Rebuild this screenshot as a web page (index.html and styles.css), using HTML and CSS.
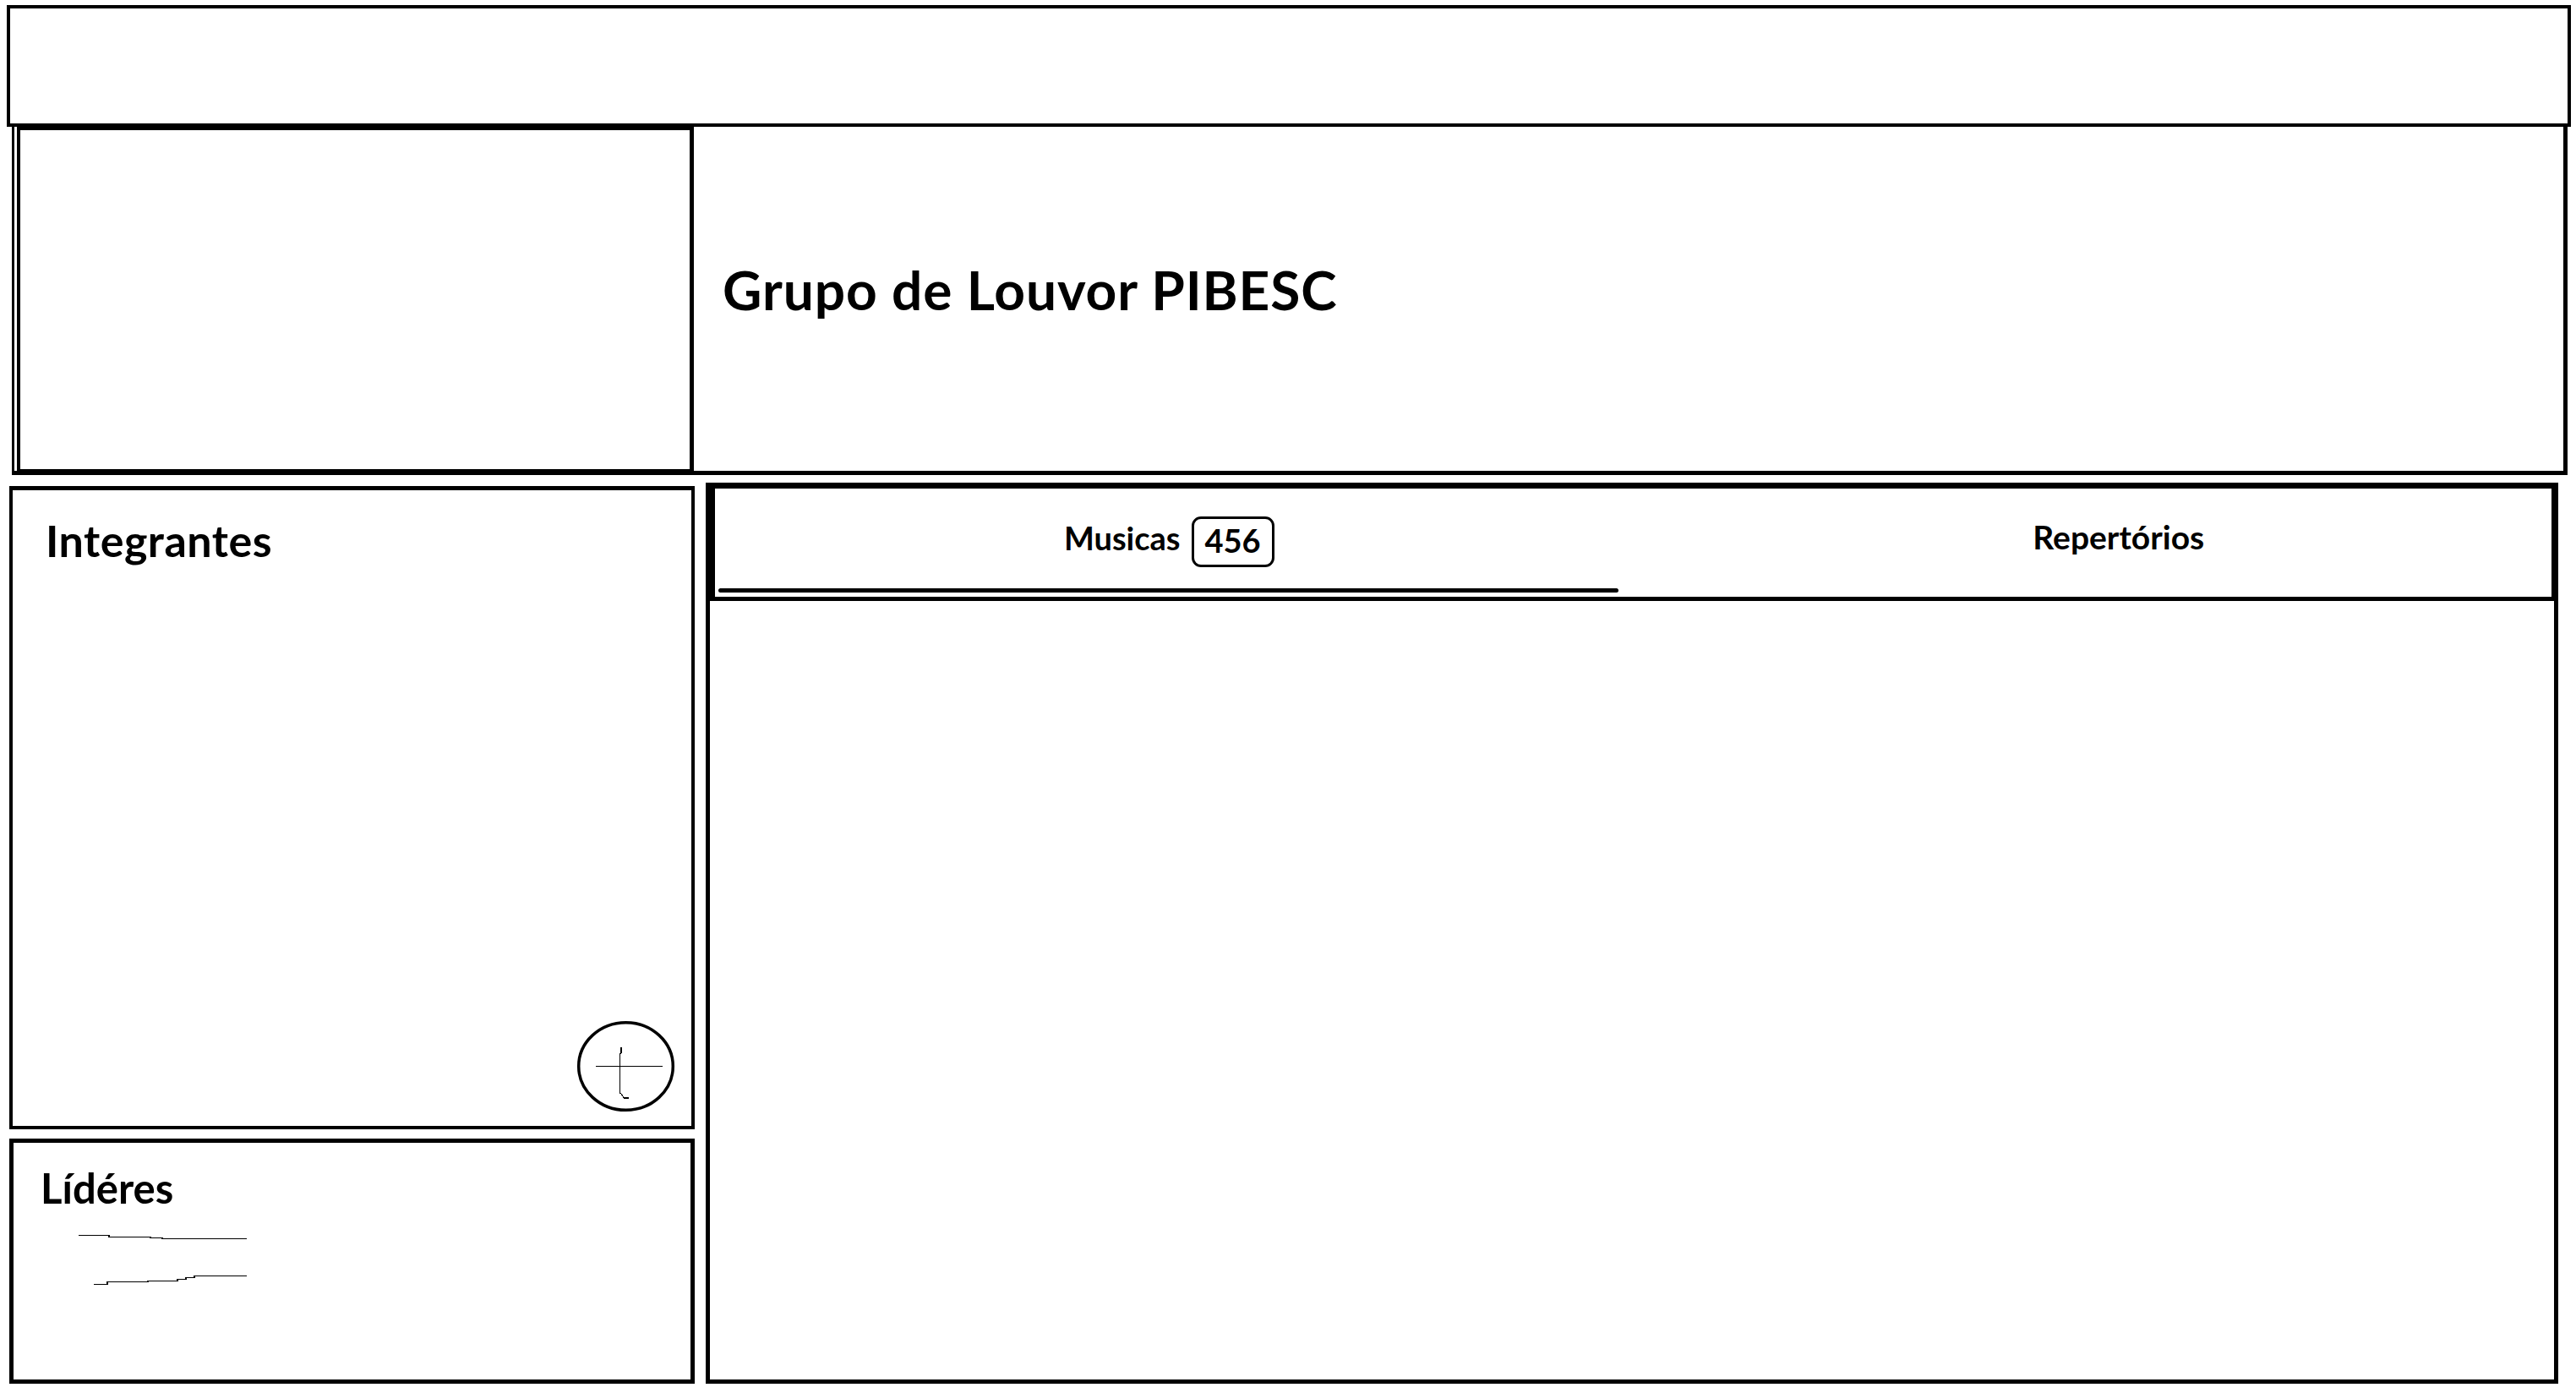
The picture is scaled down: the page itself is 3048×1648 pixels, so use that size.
FILE: index.html
```html
<!DOCTYPE html>
<html lang="pt">
<head>
<meta charset="utf-8">
<title>Grupo de Louvor PIBESC</title>
<link rel="stylesheet" href="styles.css">
</head>
<body>
<div class="page">
  <div class="topbar"></div>
  <header class="header">
    <div class="logo-box"></div>
    <div class="title-area">
      <h1 class="title">Grupo de Louvor PIBESC</h1>
    </div>
  </header>
  <main class="main">
    <div class="left-col">
      <section class="card integrantes">
        <h2 class="card-title integrantes-title">Integrantes</h2>
        <button class="add-btn" aria-label="Adicionar">
          <svg width="119" height="111" viewBox="0 0 119 111">
            <ellipse cx="59.5" cy="55.5" rx="55.8" ry="51.8" fill="none" stroke="#000" stroke-width="3.5"/>
            <line x1="24" y1="55.5" x2="103" y2="55.5" stroke="#000" stroke-width="1.2" shape-rendering="crispEdges"/>
            <polyline points="54,33 54,39.7 52.3,40.7 52.3,87.3 54,88 57.3,93 63,93" fill="none" stroke="#000" stroke-width="1.2" shape-rendering="crispEdges"/>
          </svg>
        </button>
      </section>
      <section class="card lideres">
        <h2 class="card-title lideres-title">Lídéres</h2>
        <svg class="lideres-lines" width="206" height="64" viewBox="0 0 206 64" shape-rendering="crispEdges">
          <polyline points="3,3.5 39,3.5 39,5.5 88,5.5 88,6.5 102,6.5 102,7.5 202,7.5" fill="none" stroke="#000" stroke-width="1.2"/>
          <polyline points="21,61.5 37,61.5 37,58.5 85,58.5 85,57.5 120,57.5 120,55.5 130,55.5 130,53.5 140,53.5 140,51.5 202,51.5" fill="none" stroke="#000" stroke-width="1.2"/>
        </svg>
      </section>
    </div>
    <section class="content-panel">
      <nav class="tabbar">
        <div class="tab tab-active">
          <div class="tab-row">
            <span class="tab-label">Musicas</span>
            <span class="badge">456</span>
          </div>
          <div class="tab-indicator"></div>
        </div>
        <div class="tab tab-second">
          <div class="tab-row">
            <span class="tab-label">Repertórios</span>
          </div>
        </div>
      </nav>
      <div class="tab-content"></div>
    </section>
  </main>
</div>
</body>
</html>
```
FILE: styles.css
```css
* {
  box-sizing: border-box;
}

html, body {
  margin: 0;
  padding: 0;
  background: #fff;
}

body {
  font-family: Lato, "Open Sans", "Noto Sans", sans-serif;
  color: #000;
}

.page {
  width: 3048px;
  height: 1648px;
  padding-top: 6px;
  display: flex;
  flex-direction: column;
}

.topbar {
  margin: 0 6px 0 8px;
  height: 144px;
  border: 4px solid #000;
}

.header {
  margin: 0 10px 0 14px;
  height: 412px;
  border-left: 3px solid #000;
  border-right: 5px solid #000;
  border-bottom: 5px solid #000;
  padding-left: 3px;
  display: flex;
}

.logo-box {
  width: 801px;
  border-left: 4px solid #000;
  border-top: 4px solid #000;
  border-right: 5px solid #000;
  border-bottom: 2px solid #000;
}

.title-area {
  flex: 1;
  display: flex;
  align-items: center;
  padding-left: 34px;
  padding-bottom: 22px;
}

.title {
  margin: 0;
  font-size: 64px;
  letter-spacing: 0.9px;
  line-height: 1;
  font-weight: 700;
}

.main {
  margin-top: 9px;
  height: 1066px;
  padding-left: 11px;
  display: flex;
  gap: 13px;
}

.left-col {
  width: 811px;
  padding-top: 4px;
  display: flex;
  flex-direction: column;
  gap: 11px;
}

.card {
  position: relative;
  border: 4px solid #000;
}

.integrantes {
  height: 761px;
  border-top-width: 5px;
}

.lideres {
  flex: 1;
  border-width: 5px;
}

.card-title {
  margin: 0;
  font-weight: 700;
  line-height: 1;
}

.integrantes-title {
  font-size: 52px;
  letter-spacing: 0.5px;
  margin-top: 33px;
  padding-left: 39px;
}

.lideres-title {
  font-size: 49px;
  margin-top: 29px;
  padding-left: 32px;
}

.lideres-lines {
  display: block;
  margin: 28px 0 0 74px;
}

.add-btn {
  position: absolute;
  right: 18px;
  bottom: 15px;
  width: 119px;
  height: 111px;
  padding: 0;
  border: 0;
  background: transparent;
}

.add-btn svg {
  display: block;
}

.content-panel {
  width: 2192px;
  border: 5px solid #000;
  display: flex;
  flex-direction: column;
}

.tabbar {
  height: 135px;
  border-left: 6px solid #000;
  border-top: 2px solid #000;
  border-right: 3px solid #000;
  border-bottom: 5px solid #000;
  display: grid;
  grid-template-columns: 1fr 1fr;
}

.tab {
  display: flex;
  flex-direction: column;
  padding-top: 33px;
}

.tab-active .tab-row {
  padding-right: 12px;
}

.tab-second {
  padding-left: 62px;
}

.tab-row {
  height: 60px;
  display: flex;
  justify-content: center;
  align-items: center;
  gap: 13px;
}

.tab-label {
  font-size: 38px;
  font-weight: 700;
  line-height: 1;
  margin-bottom: 11px;
}

.tab-second .tab-label {
  font-size: 39px;
}

.badge {
  width: 98px;
  height: 60px;
  border: 3px solid #000;
  border-radius: 11px;
  display: flex;
  justify-content: center;
  align-items: center;
  padding-bottom: 5px;
  font-size: 38px;
  font-weight: 700;
  line-height: 1;
}

.tab-indicator {
  margin: auto 18px 5px 4px;
  height: 5px;
  background: #000;
  border-radius: 3px;
}

.tab-content {
  flex: 1;
}
```
